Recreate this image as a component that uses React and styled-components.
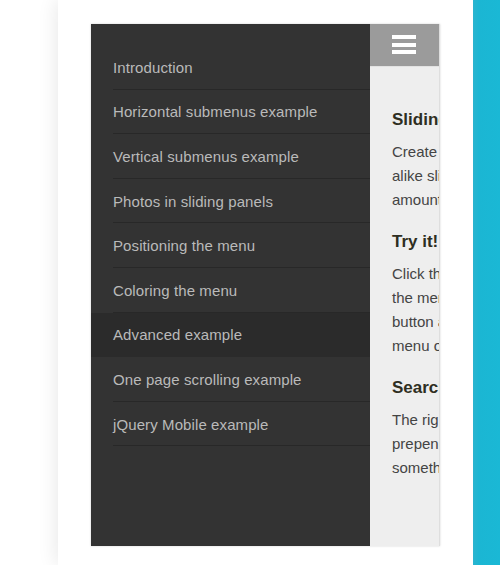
import React from "react";
import styled, { createGlobalStyle } from "styled-components";

const Global = createGlobalStyle`
  html, body { margin: 0; padding: 0; background: #fff; }
  body { font-family: "Liberation Sans", Arial, sans-serif; }
  * { box-sizing: border-box; }
`;

const Page = styled.div`
  display: flex;
  height: 565px;
  width: 500px;
  overflow: hidden;
  background: #fff;
`;

const Gutter = styled.div`
  width: 58px;
  flex: none;
  background: #fff;
`;

const Sheet = styled.div`
  width: 415px;
  flex: none;
  background: #fff;
  box-shadow: -2px 0 18px rgba(0, 0, 0, 0.09);
  padding: 24px 0 0 33px;
`;

const Accent = styled.div`
  flex: 1;
  background: linear-gradient(to right, #2ab4cf 0px, #1bb6d3 6px, #1ab8d5 100%);
`;

const Phone = styled.div`
  display: flex;
  width: 349px;
  height: 522px;
  box-shadow: 0 0 2px rgba(0, 0, 0, 0.18);
`;

const Menu = styled.ul`
  list-style: none;
  margin: 0;
  padding: 21px 0 0;
  width: 279px;
  flex: none;
  background: #333333;
`;

const Item = styled.li`
  padding-left: 22px;
  background: ${(p) => (p.$active ? "#2b2b2b" : "transparent")};
`;

const ItemLink = styled.a`
  display: flex;
  align-items: center;
  height: 44.6px;
  border-bottom: 1px solid ${(p) => (p.$active ? "#2b2b2b" : "#282828")};
  color: #bababa;
  font-size: 15px;
  letter-spacing: 0.1px;
  text-decoration: none;
  padding-top: 1px;
`;

const Panel = styled.div`
  width: 70px;
  flex: none;
  background: #eeeeee;
  overflow: hidden;
  border-right: 1px solid #dedede;
`;

const Inner = styled.div`
  width: 349px;
`;

const Header = styled.div`
  height: 43px;
  background: #9b9b9b;
  display: flex;
  align-items: center;
  padding-left: 22px;
  border-bottom: 1px solid #e2e2e2;
`;

const Burger = styled.div`
  display: flex;
  flex-direction: column;
  gap: 3.5px;
  width: 24px;
  margin-bottom: 1px;
`;

const Bar = styled.span`
  display: block;
  height: 4px;
  background: #fff;
`;

const Body = styled.div`
  padding: 0 22px;
`;

const Heading = styled.h2`
  margin: ${(p) => (p.$first ? "42px" : "19px")} 0 0;
  font-size: 17px;
  line-height: 22px;
  font-weight: bold;
  color: #2e2e22;
  white-space: nowrap;
`;

const Text = styled.p`
  margin: 9px 0 0;
  font-size: 15px;
  line-height: 24px;
  color: #444;
  white-space: nowrap;
`;

const items = [
  "Introduction",
  "Horizontal submenus example",
  "Vertical submenus example",
  "Photos in sliding panels",
  "Positioning the menu",
  "Coloring the menu",
  "Advanced example",
  "One page scrolling example",
  "jQuery Mobile example",
];

export default function App() {
  return (
    <>
      <Global />
      <Page>
        <Gutter />
        <Sheet>
          <Phone>
            <Menu>
              {items.map((t) => (
                <Item key={t} $active={t === "Advanced example"}>
                  <ItemLink href="#" $active={t === "Advanced example"}>
                    {t}
                  </ItemLink>
                </Item>
              ))}
            </Menu>
            <Panel>
              <Inner>
                <Header>
                  <Burger>
                    <Bar />
                    <Bar />
                    <Bar />
                  </Burger>
                </Header>
                <Body>
                  <Heading $first>Sliding menus</Heading>
                  <Text>
                    Create an app look-
                    <br />
                    alike sliding menu for your website with the least
                    <br />
                    amount of effort.
                  </Text>
                  <Heading>Try it!</Heading>
                  <Text>
                    Click the button in the top left corner to open
                    <br />
                    the menu, or drag the page to the right. Click the
                    <br />
                    button again or click the page to close the
                    <br />
                    menu once more.
                  </Text>
                  <Heading>Searchfield</Heading>
                  <Text>
                    The right way to add a searchfield is to
                    <br />
                    prepend it to the menu. Type
                    <br />
                    something to filter the items.
                  </Text>
                </Body>
              </Inner>
            </Panel>
          </Phone>
        </Sheet>
        <Accent />
      </Page>
    </>
  );
}
